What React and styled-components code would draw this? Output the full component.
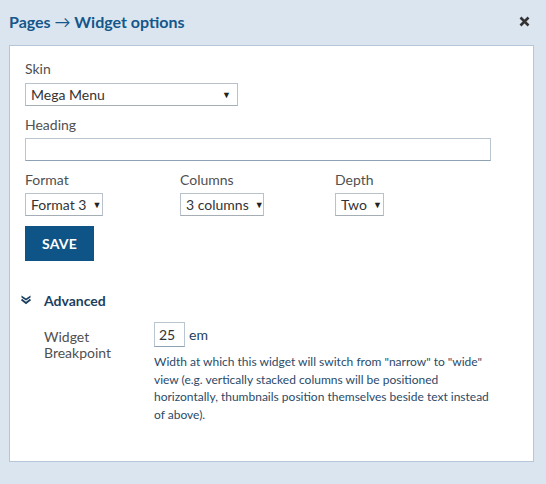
import React from "react";
import styled, { createGlobalStyle } from "styled-components";

const GlobalStyle = createGlobalStyle`
  body {
    margin: 0;
    background: #dbe5f0;
    font-family: Lato, "Open Sans", sans-serif;
    color: #444;
  }
`;

const Dialog = styled.div`
  width: 546px;
  height: 484px;
  box-sizing: border-box;
  padding: 0 12px 0 9px;
  display: flex;
  flex-direction: column;
`;

const Header = styled.div`
  height: 45px;
  display: flex;
  align-items: center;
  justify-content: space-between;
  padding-bottom: 2px;
  box-sizing: border-box;
`;

const Title = styled.h1`
  margin: 0;
  font-size: 16px;
  font-weight: 700;
  color: #14578a;
`;

const TitleArrow = styled.span`
  font-weight: 400;
`;

const Close = styled.button`
  border: 0;
  background: none;
  padding: 0;
  width: 14px;
  height: 14px;
  margin-right: 3px;
  display: flex;
  align-items: center;
  justify-content: center;
  cursor: pointer;
`;

const Panel = styled.div`
  background: #fff;
  border: 1px solid #b4c6d8;
  height: 417px;
  box-sizing: border-box;
  padding: 13px 16px 0 15px;
`;

const Field = styled.div`
  display: flex;
  flex-direction: column;
  align-items: flex-start;
  margin-bottom: ${(p) => p.$mb ?? 10}px;
`;

const Label = styled.label`
  font-size: 14px;
  line-height: 20px;
  color: #505050;
  margin-bottom: ${(p) => p.$mb ?? 3}px;
`;

const Select = styled.div`
  display: flex;
  align-items: center;
  justify-content: space-between;
  box-sizing: border-box;
  width: ${(p) => p.$w}px;
  height: 23px;
  padding: 0 6px 0 5px;
  border: 1px solid #b9c2ca;
  border-bottom-color: #a5adb5;
  font-size: 14px;
  color: #333;
  background: #fff;
  white-space: nowrap;
`;

const Arrow = styled.span`
  font-size: 9px;
  color: #222;
  margin-left: 6px;
`;

const TextInput = styled.input`
  box-sizing: border-box;
  width: ${(p) => p.$w}px;
  height: ${(p) => p.$h || 23}px;
  border: 1px solid #b9c6d2;
  border-bottom-color: #8fa2b3;
  font-family: inherit;
  font-size: 14px;
  color: #333;
  padding: 0 4px;
  outline: none;
`;

const Row = styled.div`
  display: grid;
  grid-template-columns: 155px 155px auto;
  margin-bottom: 10px;
`;

const SaveButton = styled.button`
  width: 69px;
  height: 35px;
  border: 0;
  background: #0e5486;
  color: #fff;
  font-family: inherit;
  font-weight: 700;
  font-size: 14px;
  letter-spacing: 0.2px;
  cursor: pointer;
`;

const AdvancedToggle = styled.div`
  display: flex;
  align-items: center;
  margin: 31px 0 0 -5px;
  height: 16px;
`;

const AdvancedLabel = styled.span`
  margin-left: 12px;
  font-size: 14px;
  font-weight: 700;
  color: #1c3f60;
`;

const AdvancedBody = styled.div`
  display: grid;
  grid-template-columns: 110px auto;
  margin: 14px 0 0 19px;
`;

const BreakLabel = styled.div`
  font-size: 14px;
  line-height: 16px;
  color: #505050;
  padding-top: 7px;
`;

const UnitRow = styled.div`
  display: flex;
  align-items: center;
  gap: 4px;
  font-size: 14px;
  color: #1c3f60;
`;

const Help = styled.p`
  margin: 6px 0 0;
  width: 335px;
  font-size: 12px;
  line-height: 17.5px;
  color: #2b4a68;
`;

const App = () => (
  <>
    <GlobalStyle />
    <Dialog>
      <Header>
        <Title>
          Pages <TitleArrow>→</TitleArrow> Widget options
        </Title>
        <Close aria-label="Close">
          <svg width="11" height="11" viewBox="0 0 11 11">
            <path d="M1.5 1.5 L9.5 9.5 M9.5 1.5 L1.5 9.5" stroke="#333" strokeWidth="2.6" strokeLinecap="butt" />
          </svg>
        </Close>
      </Header>
      <Panel>
        <Field $mb={9}>
          <Label $mb={4}>Skin</Label>
          <Select $w={213}>
            Mega Menu <Arrow>▼</Arrow>
          </Select>
        </Field>
        <Field $mb={9}>
          <Label>Heading</Label>
          <TextInput $w={466} />
        </Field>
        <Row>
          <Field $mb={0}>
            <Label>Format</Label>
            <Select $w={78}>
              Format 3 <Arrow>▼</Arrow>
            </Select>
          </Field>
          <Field $mb={0}>
            <Label>Columns</Label>
            <Select $w={84}>
              3 columns <Arrow>▼</Arrow>
            </Select>
          </Field>
          <Field $mb={0}>
            <Label>Depth</Label>
            <Select $w={49}>
              Two <Arrow>▼</Arrow>
            </Select>
          </Field>
        </Row>
        <SaveButton>SAVE</SaveButton>
        <AdvancedToggle>
          <svg width="12" height="10" viewBox="0 0 12 10">
            <path d="M1.5 0.5 L6 3.5 L10.5 0.5 L10.5 2.5 L6 5.5 L1.5 2.5 Z" fill="#1c3f60" />
            <path d="M1.5 4.5 L6 8 L10.5 4.5" stroke="#1c3f60" strokeWidth="1.8" fill="none" />
          </svg>
          <AdvancedLabel>Advanced</AdvancedLabel>
        </AdvancedToggle>
        <AdvancedBody>
          <BreakLabel>
            Widget
            <br />
            Breakpoint
          </BreakLabel>
          <div>
            <UnitRow>
              <TextInput $w={31} $h={25} defaultValue="25" />
              em
            </UnitRow>
            <Help>
              Width at which this widget will switch from "narrow" to "wide"
              view (e.g. vertically stacked columns will be positioned
              horizontally, thumbnails position themselves beside text instead
              of above).
            </Help>
          </div>
        </AdvancedBody>
      </Panel>
    </Dialog>
  </>
);

export default App;
